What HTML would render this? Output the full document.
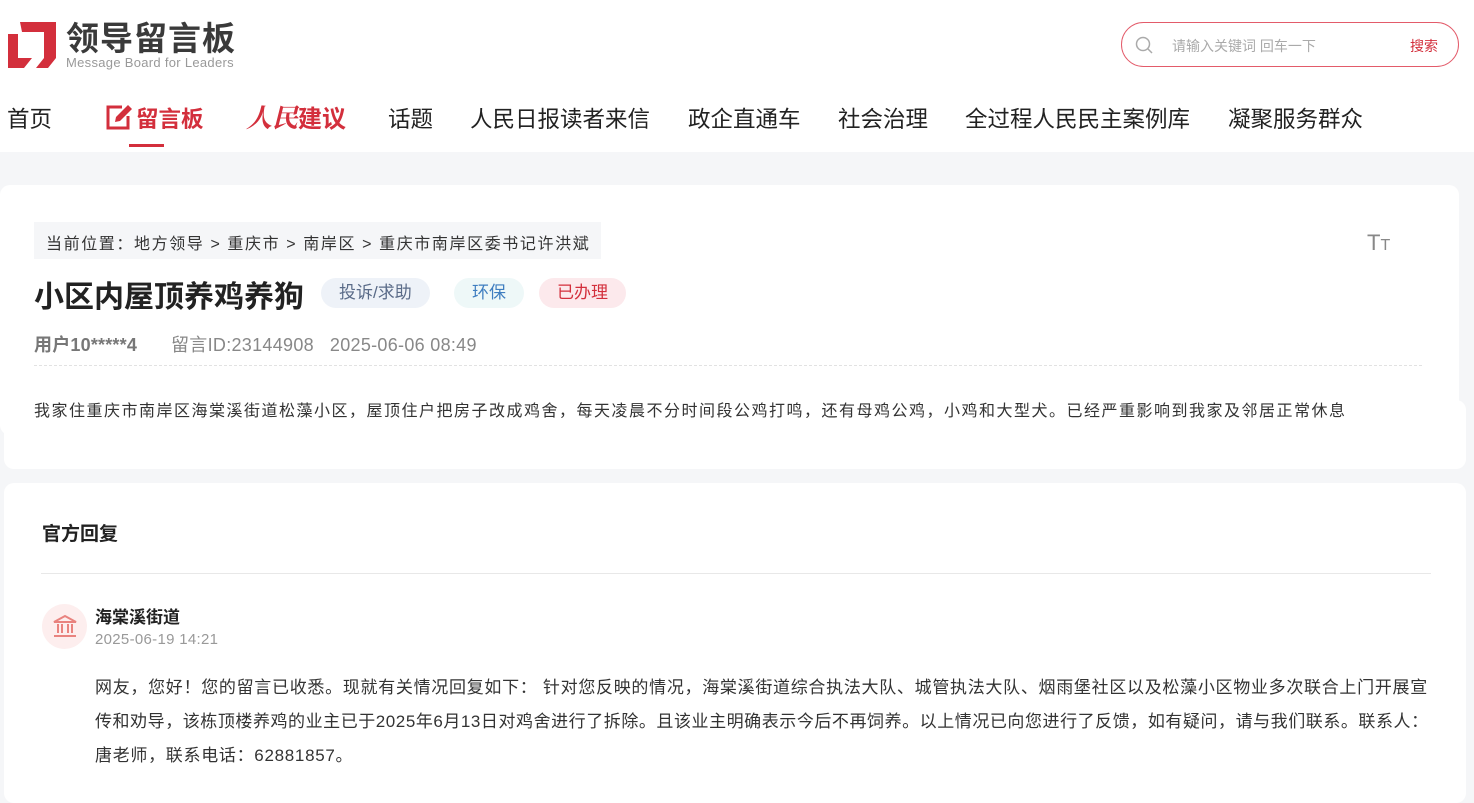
<!DOCTYPE html>
<html><head><meta charset="utf-8"><style>
*{margin:0;padding:0;box-sizing:border-box}
body{width:1474px;height:783px;overflow:hidden;background:#f5f6f8;font-family:"Liberation Sans","Noto Sans CJK SC",sans-serif;color:#333;position:relative}
.hdr{position:absolute;left:0;top:0;width:1474px;height:152px;background:#fff}
.abs{position:absolute;white-space:nowrap}
.nav{font-size:22.5px;color:#222;top:102px}
.card{position:absolute;background:#fff;border-radius:10px}
.tag{position:absolute;top:278px;height:30px;line-height:30px;border-radius:15px;font-size:17px;padding:0 18px}
</style></head><body>
<div class="hdr"></div>
<svg class="abs" style="left:8px;top:20px" width="50" height="50" viewBox="0 0 50 50"><path d="M12 2H48V38L40 48H28L36 38V12H14Z" fill="#d32f3c"/><path d="M0 14H10V38H24L16 48H0Z" fill="#d32f3c"/></svg>
<div class="abs" style="left:66px;top:19px;font-size:33px;font-weight:bold;color:#3a3a3a;letter-spacing:1px;line-height:40px">领导留言板</div>
<div class="abs" style="left:66px;top:55px;font-size:13px;color:#999;letter-spacing:0.3px">Message Board for Leaders</div>
<div class="abs" style="left:1121px;top:22px;width:338px;height:45px;border:1px solid #e35b6a;border-radius:23px"></div>
<svg class="abs" style="left:1135px;top:36px" width="18" height="18" viewBox="0 0 18 18"><circle cx="8" cy="8" r="6.5" fill="none" stroke="#aaa" stroke-width="1.5"/><path d="M13 13l4 4" stroke="#aaa" stroke-width="1.5"/></svg>
<div class="abs" style="left:1172px;top:36px;font-size:14px;color:#aaa">请输入关键词 回车一下</div>
<div class="abs" style="left:1410px;top:36px;font-size:14px;color:#d32f3c">搜索</div>
<div class="abs nav" style="left:7px">首页</div>
<svg class="abs" style="left:106px;top:104px" width="26" height="26" viewBox="0 0 26 26"><path d="M16 3H2V24H22V12" fill="none" stroke="#d32f3c" stroke-width="3"/><path d="M22 1L26 5L14 17L9 18L10 13Z" fill="#d32f3c"/></svg>
<div class="abs nav" style="left:136px;color:#d32f3c;font-weight:bold">留言板</div>
<div class="abs" style="left:129px;top:144px;width:35px;height:3px;background:#d32f3c"></div>
<div class="abs nav" style="left:246px;color:#d32f3c;font-weight:bold;font-style:italic;font-family:'Noto Serif CJK SC',serif;top:98px;font-size:26px">人民<span style="font-style:normal;font-family:'Noto Sans CJK SC';font-size:24px">建议</span></div>
<div class="abs nav" style="left:388px">话题</div>
<div class="abs nav" style="left:470px">人民日报读者来信</div>
<div class="abs nav" style="left:688px">政企直通车</div>
<div class="abs nav" style="left:838px">社会治理</div>
<div class="abs nav" style="left:965px">全过程人民民主案例库</div>
<div class="abs nav" style="left:1228px">凝聚服务群众</div>

<div class="card" style="left:0;top:185px;width:1459px;height:250px"></div>
<div class="card" style="left:4px;top:400px;width:1462px;height:69px"></div>
<div class="abs" style="left:34px;top:222px;width:567px;height:37px;background:#f5f6f8"></div>
<div class="abs" style="left:46px;top:230px;font-size:16px;color:#333;letter-spacing:1.6px">当前位置：地方领导 &gt; 重庆市 &gt; 南岸区 &gt; 重庆市南岸区委书记许洪斌</div>
<div class="abs" style="left:1367px;top:230px;font-size:22px;color:#888">T<span style="font-size:16px">T</span></div>
<div class="abs" style="left:34px;top:272px;font-size:30px;font-weight:bold;color:#222">小区内屋顶养鸡养狗</div>
<div class="tag" style="left:321px;background:#eef2f8;color:#5a6b88">投诉/求助</div>
<div class="tag" style="left:454px;background:#eef8f8;color:#3f7ec0">环保</div>
<div class="tag" style="left:539px;background:#fce9ec;color:#d32f3c">已办理</div>
<div class="abs" style="left:34px;top:331px;font-size:18px;color:#777;letter-spacing:0.2px"><b>用户10*****4</b></div>
<div class="abs" style="left:171px;top:331px;font-size:18px;color:#888;letter-spacing:0.3px">留言ID:23144908&nbsp;&nbsp;&nbsp;2025-06-06 08:49</div>
<div class="abs" style="left:34px;top:365px;width:1388px;border-top:1px dashed #e2e2e2"></div>
<div class="abs" style="left:34px;top:397px;font-size:16px;color:#333;letter-spacing:1.5px">我家住重庆市南岸区海棠溪街道松藻小区，屋顶住户把房子改成鸡舍，每天凌晨不分时间段公鸡打鸣，还有母鸡公鸡，小鸡和大型犬。已经严重影响到我家及邻居正常休息</div>

<div class="card" style="left:4px;top:483px;width:1462px;height:320px"></div>
<div class="abs" style="left:42px;top:519px;font-size:19px;font-weight:bold;color:#222">官方回复</div>
<div class="abs" style="left:41px;top:573px;width:1390px;border-top:1px solid #e8e8e8"></div>
<div class="abs" style="left:42px;top:604px;width:45px;height:45px;border-radius:50%;background:#fdeeee"></div>
<svg class="abs" style="left:52px;top:613px" width="26" height="26" viewBox="0 0 26 26" fill="none" stroke="#e9837f" stroke-width="2"><path d="M2 9L13 3L24 9Z"/><path d="M6 11V20M10 11V20M16 11V20M20 11V20M2 23H24"/></svg>
<div class="abs" style="left:95px;top:603px;font-size:17px;font-weight:bold;color:#222">海棠溪街道</div>
<div class="abs" style="left:95px;top:631px;font-size:15px;color:#999;letter-spacing:0.3px">2025-06-19 14:21</div>
<div class="abs" style="left:95px;top:671px;font-size:17px;line-height:34px;color:#333;letter-spacing:0.7px">网友，您好！您的留言已收悉。现就有关情况回复如下： 针对您反映的情况，海棠溪街道综合执法大队、城管执法大队、烟雨堡社区以及松藻小区物业多次联合上门开展宣<br><span style="letter-spacing:0.55px">传和劝导，该栋顶楼养鸡的业主已于2025年6月13日对鸡舍进行了拆除。且该业主明确表示今后不再饲养。以上情况已向您进行了反馈，如有疑问，请与我们联系。联系人：</span><br>唐老师，联系电话：62881857。</div>
</body></html>
